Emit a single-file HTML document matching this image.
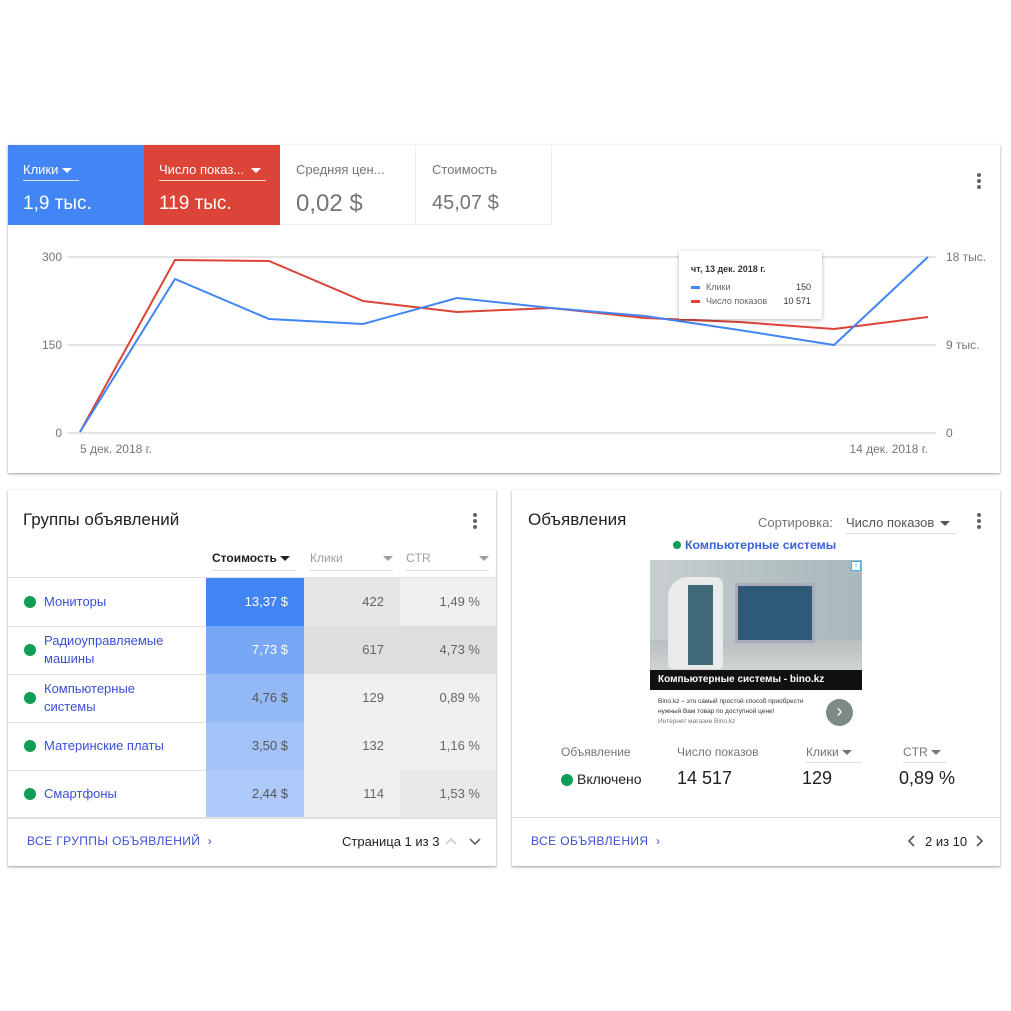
<!DOCTYPE html>
<html><head><meta charset="utf-8"><style>
*{margin:0;padding:0;box-sizing:border-box}
body{width:1011px;height:1011px;background:#fff;font-family:"Liberation Sans",Arial,sans-serif;position:relative;overflow:hidden;color:#212121}
.a{position:absolute}
.card{position:absolute;background:#fff;box-shadow:0 1px 3px rgba(0,0,0,.3),0 1px 1px rgba(0,0,0,.12)}
.dots{position:absolute;width:4px;height:16px}
.dots i{display:block;width:4px;height:4px;border-radius:2px;background:#666;margin-bottom:2px}
.tri{display:inline-block;width:0;height:0;border-left:5px solid transparent;border-right:5px solid transparent;border-top:5px solid currentColor;vertical-align:middle}
.g{color:#757575}
.dot{position:absolute;width:12px;height:12px;border-radius:6px;background:#0f9d58}
.cell{position:absolute;font-size:13px;text-align:right;padding-right:16px}
.nm{position:absolute;left:36px;font-size:13px;color:#3c4fd6;line-height:18px}
</style></head><body>

<div class="card" style="left:8px;top:145px;width:992px;height:328px"></div>
<div class="a" style="left:8px;top:145px;width:136px;height:80px;background:#4285f4"></div>
<div class="a" style="left:144px;top:145px;width:136px;height:80px;background:#db4437"></div>
<div class="a" style="left:280px;top:145px;width:136px;height:80px;border-right:1px solid #eee;border-bottom:1px solid #eee"></div>
<div class="a" style="left:416px;top:145px;width:136px;height:80px;border-right:1px solid #eee;border-bottom:1px solid #eee"></div>
<div class="a" style="left:23px;top:162px;color:#fff;font-size:13px;border-bottom:1px solid rgba(255,255,255,.8);padding-bottom:3px;width:56px">Клики <span class="tri"></span></div>
<div class="a" style="left:23px;top:193px;color:#fff;font-size:19px">1,9 тыс.</div>
<div class="a" style="left:159px;top:162px;color:#fff;font-size:13px;border-bottom:1px solid rgba(255,255,255,.8);padding-bottom:3px;width:107px">Число показ... <span class="tri" style="margin-left:3px"></span></div>
<div class="a" style="left:159px;top:193px;color:#fff;font-size:19px">119 тыс.</div>
<div class="a g" style="left:296px;top:162px;font-size:13px">Средняя цен...</div>
<div class="a g" style="left:296px;top:190px;font-size:24px">0,02 $</div>
<div class="a g" style="left:432px;top:162px;font-size:13px">Стоимость</div>
<div class="a g" style="left:432px;top:192px;font-size:20px">45,07 $</div>
<div class="dots" style="left:977px;top:173px"><i></i><i></i><i></i></div>

<svg class="a" style="left:0;top:0" width="1011" height="480">
<g stroke="#e4e4e4" stroke-width="2"><line x1="68" y1="257" x2="936" y2="257"/><line x1="68" y1="345" x2="936" y2="345"/><line x1="68" y1="433" x2="936" y2="433"/></g>
<g font-size="12" fill="#757575" font-family="Liberation Sans,Arial,sans-serif">
<text x="62" y="261" text-anchor="end">300</text><text x="62" y="349" text-anchor="end">150</text><text x="62" y="437" text-anchor="end">0</text>
<text x="946" y="261">18 тыс.</text><text x="946" y="349">9 тыс.</text><text x="946" y="437">0</text>
<text x="80" y="453">5 дек. 2018 г.</text><text x="928" y="453" text-anchor="end">14 дек. 2018 г.</text></g>
<polyline fill="none" stroke="#db4437" stroke-width="2" points="80,432 175,260 269,261 363,301 457,312 551,308 645,318 739,322 834,329 928,317"/>
<polyline fill="none" stroke="#4285f4" stroke-width="2" points="80,432 175,279 269,319 363,324 457,298 551,308 645,316 739,330 834,345 928,257"/>
</svg>
<div class="card" style="left:679px;top:251px;width:143px;height:68px;box-shadow:0 1px 4px rgba(0,0,0,.3)"></div>
<div class="a" style="left:691px;top:264px;font-size:9px;font-weight:bold;color:#333">чт, 13 дек. 2018 г.</div>
<div class="a" style="left:691px;top:282px;width:120px;font-size:9px;color:#666"><span style="display:inline-block;width:9px;height:3px;background:#4285f4;vertical-align:middle;margin-right:6px"></span>Клики<span style="float:right;color:#333">150</span></div>
<div class="a" style="left:691px;top:296px;width:120px;font-size:9px;color:#666"><span style="display:inline-block;width:9px;height:3px;background:#db4437;vertical-align:middle;margin-right:6px"></span>Число показов<span style="float:right;color:#333">10 571</span></div>

<div class="card" style="left:8px;top:490px;width:488px;height:376px"></div>
<div class="a" style="left:23px;top:510px;font-size:17px;color:#212121">Группы объявлений</div>
<div class="dots" style="left:473px;top:513px"><i></i><i></i><i></i></div>
<div class="a" style="left:212px;top:551px;width:84px;font-size:12px;font-weight:bold;border-bottom:1px solid #ddd;padding-bottom:5px">Стоимость <span class="tri" style="color:#222"></span></div>
<div class="a g" style="left:310px;top:551px;width:83px;font-size:12px;border-bottom:1px solid #ddd;padding-bottom:5px;color:#9e9e9e">Клики<span class="tri" style="float:right;margin-top:5px"></span></div>
<div class="a g" style="left:406px;top:551px;width:83px;font-size:12px;border-bottom:1px solid #ddd;padding-bottom:5px;color:#9e9e9e">CTR<span class="tri" style="float:right;margin-top:5px"></span></div>
<div class="a" style="left:8px;top:577px;width:488px;border-top:1px solid #e0e0e0"></div>

<div class="a" style="left:8px;top:578px;width:488px;height:240px">
 <div class="a" style="left:0;top:48px;width:488px;border-top:1px solid #e0e0e0"></div>
 <div class="a" style="left:0;top:96px;width:488px;border-top:1px solid #e0e0e0"></div>
 <div class="a" style="left:0;top:144px;width:488px;border-top:1px solid #e0e0e0"></div>
 <div class="a" style="left:0;top:192px;width:488px;border-top:1px solid #e0e0e0"></div>
 <div class="a" style="left:0;top:240px;width:488px;border-top:1px solid #e0e0e0"></div>

 <div class="cell" style="left:198px;top:0;width:98px;height:48px;line-height:48px;background:#4285f4;color:#fff">13,37 $</div>
 <div class="cell" style="left:198px;top:48px;width:98px;height:48px;line-height:48px;background:#78a7f6;color:#fff">7,73 $</div>
 <div class="cell" style="left:198px;top:96px;width:98px;height:48px;line-height:48px;background:#94b9f7;color:#555">4,76 $</div>
 <div class="cell" style="left:198px;top:144px;width:98px;height:48px;line-height:48px;background:#a3c2f8;color:#555">3,50 $</div>
 <div class="cell" style="left:198px;top:192px;width:98px;height:48px;line-height:48px;background:#adc9f9;color:#555">2,44 $</div>

 <div class="cell" style="left:296px;top:0;width:96px;height:48px;line-height:48px;background:#e6e6e6;color:#666">422</div>
 <div class="cell" style="left:296px;top:48px;width:96px;height:48px;line-height:48px;background:#dedede;color:#666">617</div>
 <div class="cell" style="left:296px;top:96px;width:96px;height:48px;line-height:48px;background:#efefef;color:#666">129</div>
 <div class="cell" style="left:296px;top:144px;width:96px;height:48px;line-height:48px;background:#efefef;color:#666">132</div>
 <div class="cell" style="left:296px;top:192px;width:96px;height:48px;line-height:48px;background:#efefef;color:#666">114</div>

 <div class="cell" style="left:392px;top:0;width:96px;height:48px;line-height:48px;background:#efefef;color:#666">1,49 %</div>
 <div class="cell" style="left:392px;top:48px;width:96px;height:48px;line-height:48px;background:#dedede;color:#666">4,73 %</div>
 <div class="cell" style="left:392px;top:96px;width:96px;height:48px;line-height:48px;background:#efefef;color:#666">0,89 %</div>
 <div class="cell" style="left:392px;top:144px;width:96px;height:48px;line-height:48px;background:#efefef;color:#666">1,16 %</div>
 <div class="cell" style="left:392px;top:192px;width:96px;height:48px;line-height:48px;background:#e8e8e8;color:#666">1,53 %</div>

 <div class="dot" style="left:16px;top:18px"></div><div class="nm" style="top:15px">Мониторы</div>
 <div class="dot" style="left:16px;top:66px"></div><div class="nm" style="top:54px">Радиоуправляемые<br>машины</div>
 <div class="dot" style="left:16px;top:114px"></div><div class="nm" style="top:102px">Компьютерные<br>системы</div>
 <div class="dot" style="left:16px;top:162px"></div><div class="nm" style="top:159px">Материнские платы</div>
 <div class="dot" style="left:16px;top:210px"></div><div class="nm" style="top:207px">Смартфоны</div>
</div>
<div class="a" style="left:27px;top:834px;font-size:12px;color:#3c4fd6;letter-spacing:.4px">ВСЕ ГРУППЫ ОБЪЯВЛЕНИЙ &nbsp;›</div>
<div class="a" style="left:342px;top:834px;font-size:13px;color:#212121">Страница 1 из 3</div>
<svg class="a" style="left:444px;top:834px" width="50" height="14"><polyline points="2,10 7,5 12,10" fill="none" stroke="#ccc" stroke-width="1.6"/><polyline points="26,5 31,10 36,5" fill="none" stroke="#666" stroke-width="1.6"/></svg>

<div class="card" style="left:512px;top:490px;width:488px;height:376px"></div>
<div class="a" style="left:528px;top:510px;font-size:17px">Объявления</div>
<div class="a g" style="left:758px;top:515px;font-size:13px">Сортировка:</div>
<div class="a" style="left:846px;top:515px;width:110px;font-size:13px;color:#555;border-bottom:1px solid #ddd;padding-bottom:3px">Число показов <span class="tri" style="margin-left:2px"></span></div>
<div class="dots" style="left:977px;top:513px"><i></i><i></i><i></i></div>
<div class="a" style="left:673px;top:538px;font-size:12.3px;font-weight:bold;color:#3c63d6"><span style="display:inline-block;width:8px;height:8px;border-radius:4px;background:#0f9d58;margin-right:4px"></span>Компьютерные системы</div>
<div class="a" style="left:650px;top:560px;width:212px;height:130px;background:linear-gradient(90deg,#c9cfd0 0%,#b9c4c5 40%,#a8b8bc 100%)"></div>
<div class="a" style="left:650px;top:640px;width:212px;height:30px;background:linear-gradient(180deg,#b8bfc0,#cfd4d3)"></div>
<div class="a" style="left:668px;top:577px;width:55px;height:92px;border-radius:20px 8px 4px 4px;background:#e8ebea"></div>
<div class="a" style="left:688px;top:585px;width:25px;height:80px;background:#3e6a7a"></div>
<div class="a" style="left:735px;top:583px;width:80px;height:60px;background:#2e5a78;border:3px solid #aab"></div>
<div class="a" style="left:650px;top:670px;width:212px;height:20px;background:#111;color:#fff;font-size:10px;font-weight:bold;padding:4px 8px">Компьютерные системы - bino.kz</div>
<div class="a" style="left:851px;top:561px;width:10px;height:10px;background:#fff;border:1px solid #3fb1e0;font-size:7px;color:#3fb1e0;text-align:center;line-height:8px">i</div>
<div class="a" style="left:658px;top:697px;font-size:6.5px;color:#333;line-height:10px">Bino.kz – это самый простой способ приобрести<br>нужный Вам товар по доступной цене!<br><span style="color:#777">Интернет магазин Bino.kz</span></div>
<div class="a" style="left:826px;top:699px;width:27px;height:27px;border-radius:14px;background:#7d8a88;color:#fff;font-size:18px;text-align:center;line-height:25px">›</div>

<div class="a g" style="left:561px;top:745px;font-size:12px">Объявление</div>
<div class="a g" style="left:677px;top:745px;font-size:12px">Число показов</div>
<div class="a g" style="left:806px;top:745px;width:56px;font-size:12px;border-bottom:1px solid #ddd;padding-bottom:3px">Клики <span class="tri"></span></div>
<div class="a g" style="left:903px;top:745px;width:43px;font-size:12px;border-bottom:1px solid #ddd;padding-bottom:3px">CTR <span class="tri"></span></div>
<div class="dot" style="left:561px;top:774px"></div>
<div class="a" style="left:577px;top:771px;font-size:14px">Включено</div>
<div class="a" style="left:677px;top:768px;font-size:18px">14 517</div>
<div class="a" style="left:802px;top:768px;font-size:18px">129</div>
<div class="a" style="left:899px;top:768px;font-size:18px">0,89 %</div>
<div class="a" style="left:512px;top:817px;width:488px;border-top:1px solid #e0e0e0"></div>
<div class="a" style="left:8px;top:817px;width:488px;border-top:1px solid #e0e0e0"></div>
<div class="a" style="left:531px;top:834px;font-size:12px;color:#3c4fd6;letter-spacing:.4px">ВСЕ ОБЪЯВЛЕНИЯ &nbsp;›</div>
<svg class="a" style="left:906px;top:834px" width="90" height="14"><polyline points="8,2 3,7 8,12" fill="none" stroke="#555" stroke-width="1.6"/><polyline points="71,2 76,7 71,12" fill="none" stroke="#555" stroke-width="1.6"/></svg>
<div class="a" style="left:925px;top:834px;font-size:13px">2 из 10</div>
</body></html>
